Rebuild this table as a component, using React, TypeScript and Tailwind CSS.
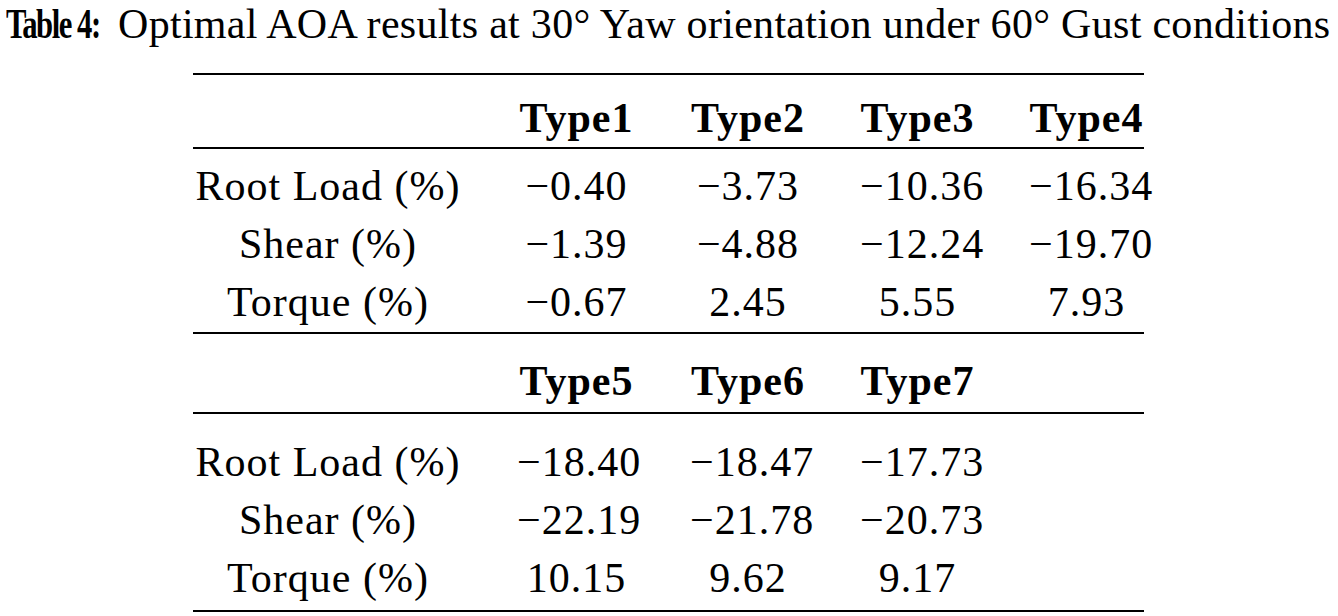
const serif = { fontFamily: '"Liberation Serif", "DejaVu Serif", serif' }

const block1 = {
  head: ['Type1', 'Type2', 'Type3', 'Type4'],
  rows: [
    ['Root Load (%)', '−0.40', '−3.73', '−10.36', '−16.34'],
    ['Shear (%)', '−1.39', '−4.88', '−12.24', '−19.70'],
    ['Torque (%)', '−0.67', '2.45', '5.55', '7.93'],
  ],
}

const block2 = {
  head: ['Type5', 'Type6', 'Type7', ''],
  rows: [
    ['Root Load (%)', '−18.40', '−18.47', '−17.73', ''],
    ['Shear (%)', '−22.19', '−21.78', '−20.73', ''],
    ['Torque (%)', '10.15', '9.62', '9.17', ''],
  ],
}

const cols = 'grid grid-cols-[270px_119px_116px_115px_115px] gap-x-[54px] h-[58px] items-center text-center'

function Rule() {
  return <div className="h-[2px] w-full bg-black" />
}

function HeadRow({ cells }: { cells: string[] }) {
  return (
    <div className={cols}>
      <div />
      {cells.map((c, i) => (
        <div key={i} className="font-bold">{c}</div>
      ))}
    </div>
  )
}

function DataRow({ cells }: { cells: string[] }) {
  return (
    <div className={cols}>
      {cells.map((c, i) => (
        <div key={i}>{c}</div>
      ))}
    </div>
  )
}

export default function App() {
  return (
    <div className="w-[1338px] h-[616px] bg-white text-black overflow-hidden" style={serif}>
      <div className="h-[73px] pl-[6px] flex items-start gap-[20px] text-[42px] leading-[48px] whitespace-nowrap">
        <div className="w-[92px] shrink-0">
          <span className="inline-block font-bold tracking-[-2px] origin-left scale-x-[0.73]">Table 4:</span>
        </div>
        <div className="tracking-[0.3px]">Optimal AOA results at 30° Yaw orientation under 60° Gust conditions</div>
      </div>
      <div className="ml-[193px] w-[951px] text-[42px] leading-none tracking-[1px]">
        <Rule />
        <div className="pt-[14px]">
          <HeadRow cells={block1.head} />
        </div>
        <Rule />
        <div className="pt-[8px] pb-[1px]">
          {block1.rows.map((r, i) => (
            <DataRow key={i} cells={r} />
          ))}
        </div>
        <Rule />
        <div className="pt-[18px] pb-[2px]">
          <HeadRow cells={block2.head} />
        </div>
        <Rule />
        <div className="pt-[19px] pb-[3px]">
          {block2.rows.map((r, i) => (
            <DataRow key={i} cells={r} />
          ))}
        </div>
        <Rule />
      </div>
    </div>
  )
}
